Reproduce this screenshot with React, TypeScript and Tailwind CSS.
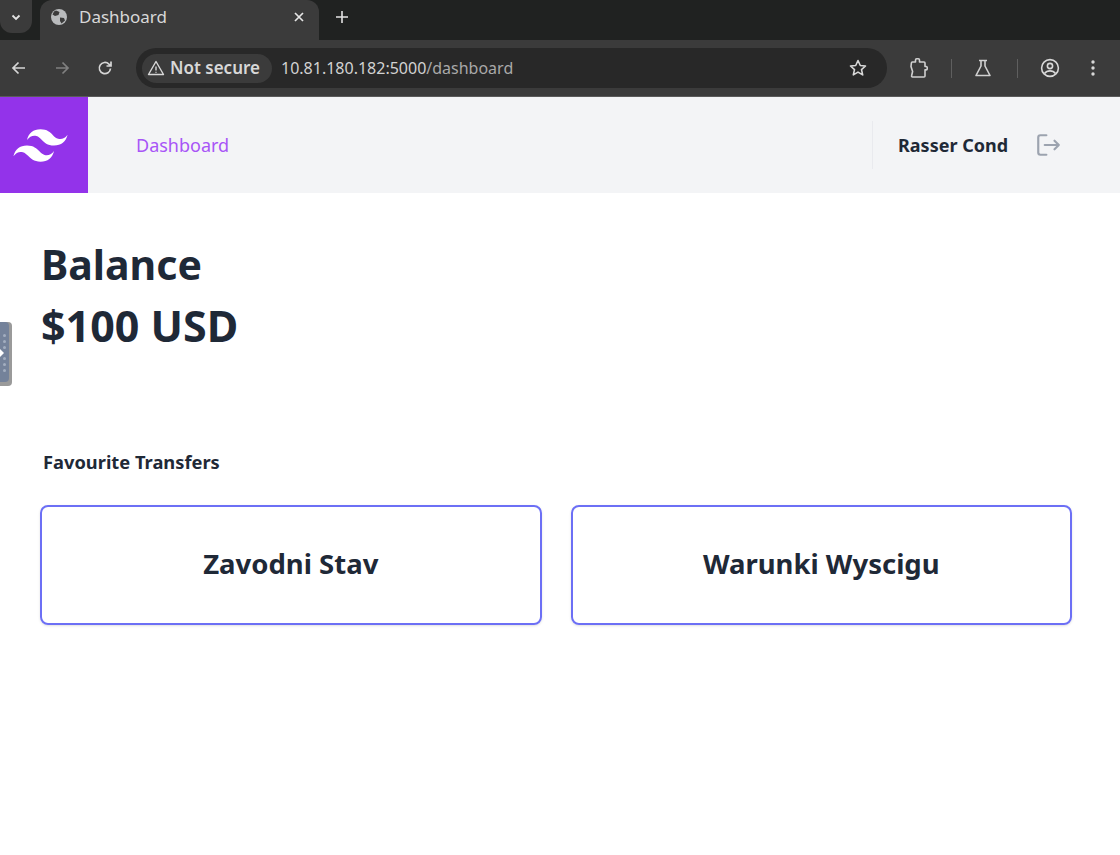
import React from "react";

const font = { fontFamily: '"Noto Sans", sans-serif' };

function Flask() {
  return (
    <svg width="20" height="20" viewBox="0 0 20 20" fill="none" stroke="#d0d0d0" strokeWidth="1.6" strokeLinejoin="round">
      <path d="M6 2.500h8M8 2.500v5.500L3 17.500h14L12 8V2.500" />
    </svg>
  );
}

function Puzzle() {
  return (
    <svg width="22" height="22" viewBox="0 0 22 22" fill="none" stroke="#d0d0d0" strokeWidth="1.6" strokeLinejoin="round">
      <path d="M7.500 5V3a1.200 1.200 0 0 1 1.200-1.200h1.600A1.200 1.200 0 0 1 11.500 3v2h4.500a1 1 0 0 1 1 1v3.500h1.200a1 1 0 0 1 1 1v1.400a1 1 0 0 1-1 1H17V19a1 1 0 0 1-1 1H4.500a1 1 0 0 1-.9-1.300l1-4.200-1.600-5 .4-3.500a1 1 0 0 1 1-1z" />
    </svg>
  );
}

function Dots({ n }: { n: number }) {
  return (
    <div className="flex flex-col gap-[3px]">
      {Array.from({ length: n }).map((_, i) => (
        <span key={i} className="w-[3px] h-[3px] rounded-full bg-[#a3aec0]" />
      ))}
    </div>
  );
}

export default function App() {
  return (
    <div className="min-h-[855px] bg-white relative overflow-hidden" style={font}>
      {/* Browser tab strip */}
      <div className="h-10 bg-[#202221] flex items-start">
        <div className="w-[32px] h-[33px] bg-[#3b3b3b] rounded-b-xl flex items-center justify-center">
          <svg width="12" height="12" viewBox="0 0 12 12" fill="none" stroke="#e3e3e3" strokeWidth="1.8"><path d="M2.500 4.500 6 8l3.500-3.500" /></svg>
        </div>
        <div className="ml-[8px] w-[279px] h-10 bg-[#3b3b3b] rounded-t-xl flex items-center pl-[10px] pr-[14px] pb-[7px]">
          <svg width="18" height="18" viewBox="0 0 18 18" className="shrink-0">
            <circle cx="9" cy="9" r="8" fill="#b9bbbd" />
            <path d="M6 2.500 9.500 4 8.500 7 5 8 2.500 6.500 4 3.500zM10 9.500l4 .5 1 2.500-3.500 3-1.500-2.500z" fill="#3b3b3b" />
          </svg>
          <span className="ml-[11px] text-[17px] text-[#d8d8d8] flex-1">Dashboard</span>
          <svg width="12" height="12" viewBox="0 0 12 12" stroke="#e6e6e6" strokeWidth="1.7"><path d="M2 2l8 8M10 2l-8 8" /></svg>
        </div>
        <div className="ml-[16px] h-[33px] flex items-center">
          <svg width="14" height="14" viewBox="0 0 14 14" stroke="#e3e3e3" strokeWidth="1.6"><path d="M7 1v12M1 7h12" /></svg>
        </div>
      </div>

      {/* Browser toolbar */}
      <div className="h-[57px] bg-[#3b3b3b] border-b border-[#5a5a5a] flex items-center">
        <div className="w-[136px] flex items-center shrink-0 pl-[10px] gap-[25px]">
          <svg width="18" height="18" viewBox="0 0 18 18" fill="none" stroke="#d6d6d6" strokeWidth="1.7"><path d="M15 9H3.500M8.500 3.500 3 9l5.500 5.500" /></svg>
          <svg width="18" height="18" viewBox="0 0 18 18" fill="none" stroke="#808080" strokeWidth="1.7"><path d="M3 9h11.500M9.500 3.500 15 9l-5.500 5.500" /></svg>
          <svg width="18" height="18" viewBox="0 0 18 18" fill="none" stroke="#d6d6d6" strokeWidth="1.7"><path d="M14.500 9.500a5.600 5.600 0 1 1-1.600-4.400L15 7M15 2.500V7h-4.500" /></svg>
        </div>
        <div className="w-[751px] h-[40px] rounded-full bg-[#282828] flex items-center pl-[6px] pr-[19px] shrink-0">
          <div className="h-[29px] w-[130px] rounded-full bg-[#3b3b3b] flex items-center pl-[5px] shrink-0">
            <svg width="18" height="18" viewBox="0 0 18 18" fill="none" stroke="#d8d8d8" strokeWidth="1.4" strokeLinejoin="round"><path d="M9 2.500 1.500 15.500h15z" /><path d="M9 7.500v4M9 12.800v1" /></svg>
            <span className="ml-[5px] text-[17px] font-semibold text-[#d8d8d8] whitespace-nowrap">Not secure</span>
          </div>
          <span className="ml-[9px] text-[16px] text-[#d2d2d2] flex-1 whitespace-nowrap">
            10.81.180.182:5000<span className="text-[#a9a9a9]">/dashboard</span>
          </span>
          <svg width="20" height="20" viewBox="0 0 20 20" fill="none" stroke="#d8d8d8" strokeWidth="1.6" strokeLinejoin="round"><path d="m10 2.500 2.300 5 5.200.5-4 3.600 1.200 5.300L10 14.100 5.300 16.900l1.200-5.300-4-3.600 5.200-.5z" /></svg>
        </div>
        <div className="flex items-center flex-1 pl-[21px]">
          <Puzzle />
          <div className="ml-[21px] w-px h-[19px] bg-[#5f5f5f]" />
          <div className="ml-[21px]"><Flask /></div>
          <div className="ml-[24px] w-px h-[19px] bg-[#5f5f5f]" />
          <svg className="ml-[22px]" width="20" height="20" viewBox="0 0 20 20" fill="none" stroke="#d8d8d8" strokeWidth="1.6"><circle cx="10" cy="10" r="8.400" /><circle cx="10" cy="8" r="2.600" /><path d="M4.500 15.500c1.500-2 3.500-2.600 5.500-2.600s4 .6 5.500 2.600" /></svg>
          <svg className="ml-[31px]" width="4" height="18" viewBox="0 0 4 18" fill="#d8d8d8"><circle cx="2" cy="3" r="1.700" /><circle cx="2" cy="9" r="1.700" /><circle cx="2" cy="15" r="1.700" /></svg>
        </div>
      </div>

      {/* App navigation */}
      <div className="h-[96px] bg-[#f3f4f6] flex items-center">
        <div className="w-[88px] h-full bg-[#9333ea] flex items-center pl-[8px] shrink-0">
          <svg width="65" height="65" viewBox="0 0 24 24" fill="#ffffff">
            <path d="M12 6.036c-2.667 0-4.333 1.325-5 3.976 1-1.325 2.167-1.822 3.500-1.491.761.189 1.305.738 1.906 1.345C13.387 10.855 14.522 12 17 12c2.667 0 4.333-1.325 5-3.976-1 1.325-2.167 1.822-3.500 1.491-.761-.189-1.305-.738-1.906-1.345-.98-.99-2.114-2.134-4.594-2.134zM7 12c-2.667 0-4.333 1.325-5 3.976 1-1.326 2.167-1.822 3.500-1.491.761.189 1.305.738 1.906 1.345.98.989 2.115 2.134 4.594 2.134 2.667 0 4.333-1.325 5-3.976-1 1.325-2.167 1.822-3.500 1.491-.761-.189-1.305-.738-1.906-1.345C10.613 13.145 9.478 12 7 12z" />
          </svg>
        </div>
        <a className="ml-[48px] text-[18px] text-[#a855f7] flex-1 -translate-y-[0.5px]">Dashboard</a>
        <div className="h-[48px] border-l border-[#e9eaee] flex items-center pl-[25px] pr-[59px]">
          <span className="text-[18px] font-bold text-[#1f2937] w-[112px] whitespace-nowrap">Rasser Cond</span>
          <svg className="ml-[25px]" width="26" height="26" viewBox="0 0 24 24" fill="none" stroke="#9ca3af" strokeWidth="2" strokeLinecap="round" strokeLinejoin="round">
            <path d="M10.500 3H5a2 2 0 0 0-2 2v14a2 2 0 0 0 2 2h5.500M9 12h13M18 8l4 4-4 4" />
          </svg>
        </div>
      </div>

      {/* Main content */}
      <main className="px-10 pt-[40px]">
        <h1 className="text-[41px] leading-[62px] font-bold text-[#1f2937] ml-px">Balance</h1>
        <h2 className="text-[43px] leading-[62px] font-bold text-[#1f2937] ml-px">$100 USD</h2>
        <h3 className="mt-[91px] ml-[3px] text-[18.3px] leading-[28px] font-bold text-[#1f2937]">Favourite Transfers</h3>
        <div className="mt-[29px] grid grid-cols-2 gap-[29px] w-[1032px]">
          <div className="h-[120px] pb-[2px] rounded-lg border-2 border-[#6c6ff5] shadow-sm flex items-center justify-center text-[27.500px] font-bold text-[#1f2937]">Zavodni Stav</div>
          <div className="h-[120px] pb-[2px] rounded-lg border-2 border-[#6c6ff5] shadow-sm flex items-center justify-center text-[27.500px] font-bold text-[#1f2937]">Warunki Wyscigu</div>
        </div>
      </main>

      {/* Floating handle */}
      <div className="absolute left-0 top-[322px] w-[12px] h-[64px] rounded-r bg-[#9a9a9a]">
        <div className="w-[9px] h-[60px] rounded-r bg-[#74829a] flex flex-col items-center justify-center gap-[8px] relative pt-[2px]">
          <Dots n={3} />
          <Dots n={3} />
          <div className="absolute left-0 top-[27px] w-0 h-0 border-y-[4px] border-y-transparent border-l-[4px] border-l-white" />
        </div>
      </div>
    </div>
  );
}
